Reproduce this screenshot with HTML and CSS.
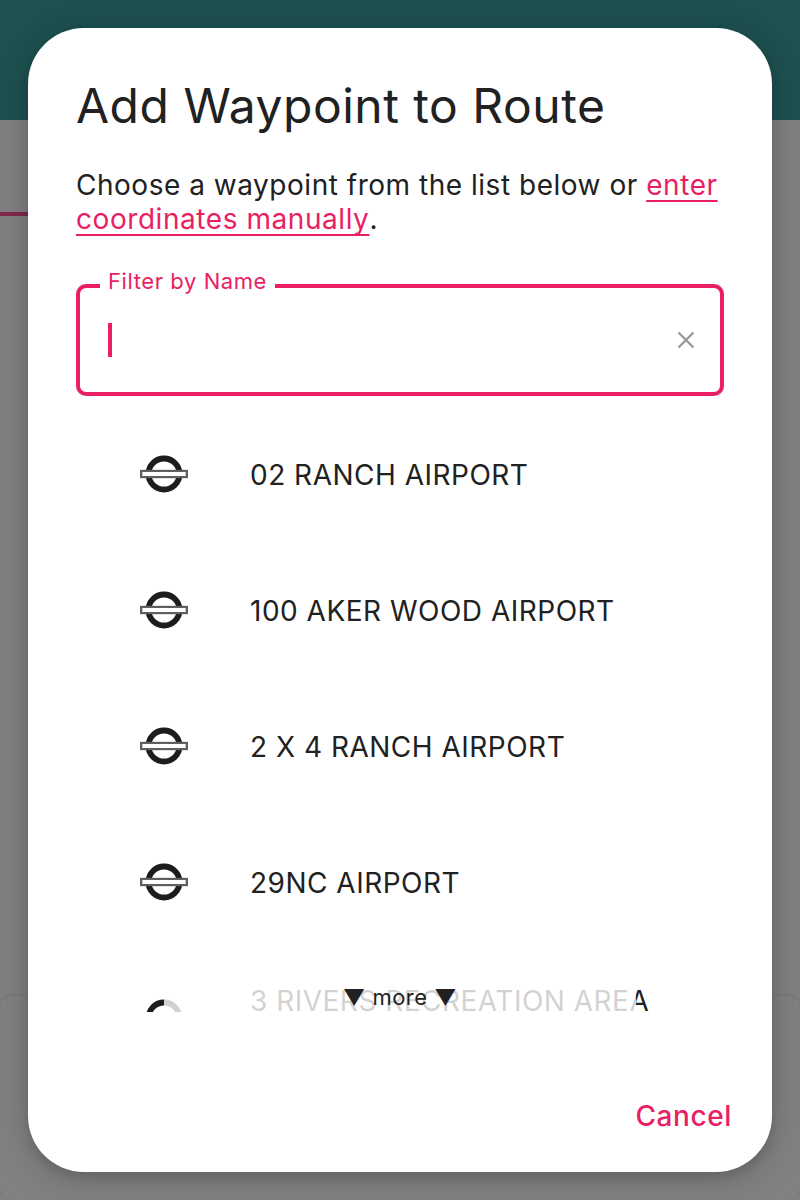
FILE: index.html
```html
<!DOCTYPE html>
<html lang="en">
<head>
<meta charset="utf-8">
<title>Add Waypoint to Route</title>
<link rel="stylesheet" href="styles.css">
</head>
<body>
<svg width="0" height="0" class="defs" aria-hidden="true">
  <symbol id="roundel" viewBox="0 0 48 48">
    <circle cx="24" cy="24" r="15.5" fill="none" stroke="#1c1c1c" stroke-width="5.8"/>
    <rect x="0" y="19.8" width="48" height="8.4" fill="#606060"/>
    <rect x="2.4" y="22" width="43.2" height="4" fill="#fff"/>
  </symbol>
</svg>
<div class="page">
  <div class="app-bar"></div>
  <div class="tabs"></div>
  <div class="content"></div>
  <div class="card"></div>
</div>
<div class="overlay">
  <main class="dialog">
    <h1 class="title">Add Waypoint to Route</h1>
    <p class="intro">Choose a waypoint from the list below or <a class="link">enter coordinates manually</a>.</p>
    <div class="field">
      <span class="label">Filter by Name</span>
      <span class="caret"></span>
      <svg class="clear" viewBox="0 0 18 18"><path d="M1.5 1.5l15 15M16.5 1.5l-15 15" fill="none" stroke="#999" stroke-width="2.3"/></svg>
    </div>
    <div class="list-wrap">
      <ul class="list">
        <li class="item"><svg class="icon"><use href="#roundel"/></svg><span class="name">02 RANCH AIRPORT</span></li>
        <li class="item"><svg class="icon"><use href="#roundel"/></svg><span class="name">100 AKER WOOD AIRPORT</span></li>
        <li class="item"><svg class="icon"><use href="#roundel"/></svg><span class="name">2 X 4 RANCH AIRPORT</span></li>
        <li class="item"><svg class="icon"><use href="#roundel"/></svg><span class="name">29NC AIRPORT</span></li>
        <li class="item"><svg class="icon"><use href="#roundel"/></svg><span class="name two-line">3 RIVERS RECREATION AREA</span></li>
      </ul>
      <div class="more">▼ more ▼</div>
    </div>
    <div class="actions"><button class="cancel">Cancel</button></div>
  </main>
</div>
</body>
</html>
```
FILE: styles.css
```css
* { box-sizing: border-box; }
body {
  margin: 0;
  height: 1200px;
  overflow: hidden;
  position: relative;
  font-family: Inter, "Liberation Sans", sans-serif;
  font-size: 28px;
  line-height: 34px;
  letter-spacing: 0.5px;
  color: #212121;
}
.defs { position: absolute; }
.page {
  height: 1200px;
  display: flex;
  flex-direction: column;
  background: #838083;
}
.app-bar { height: 120px; background: #1e5151; }
.tabs { height: 96px; border-bottom: 4px solid #812a4b; width: 400px; }
.content { flex: 1; }
.card {
  height: 204px;
  border-radius: 12px;
  background: #838083;
  box-shadow: 0 0 4px rgba(0, 0, 0, 0.12);
}
.overlay { position: absolute; inset: 0; padding: 28px; }
.dialog {
  height: 1144px;
  display: flex;
  flex-direction: column;
  padding: 48px;
  border-radius: 56px;
  background: #fff;
  box-shadow: 0 6px 10px rgba(0, 0, 0, 0.1), 0 4px 36px rgba(0, 0, 0, 0.22);
}
.title {
  margin: 0;
  padding-top: 1px;
  font-size: 48px;
  line-height: 58px;
  font-weight: 400;
}
.intro { margin: 33px 0 48px; letter-spacing: 0.52px; }
.link {
  color: #e91e63;
  letter-spacing: 0.56px;
  text-decoration: underline 2px;
  text-decoration-skip-ink: none;
  text-underline-offset: 5px;
}
.field {
  position: relative;
  flex: none;
  height: 112px;
  display: flex;
  align-items: center;
  justify-content: space-between;
  padding: 0 25px 0 28px;
  border: 4px solid #e91e63;
  border-radius: 10px;
}
.label {
  position: absolute;
  left: 20px;
  top: -24px;
  padding: 0 8px;
  background: #fff;
  color: #e91e63;
  font-size: 22px;
  line-height: 34px;
  letter-spacing: 0.58px;
}
.caret { width: 4px; height: 34px; background: #e91e63; }
.clear { width: 18px; height: 18px; }
.list-wrap {
  position: relative;
  flex: none;
  height: 606px;
  margin-top: 10px;
  overflow: hidden;
}
.list { margin: 0; padding: 0 64px; list-style: none; }
.item { height: 136px; display: flex; align-items: center; gap: 62px; white-space: nowrap; }
.icon { flex: none; width: 48px; height: 48px; filter: blur(0.6px); }
.name { padding-top: 2px; }
.two-line { padding-bottom: 36px; }
.more {
  position: absolute;
  left: 88px;
  right: 88px;
  bottom: 0;
  height: 30px;
  padding-top: 1px;
  text-align: center;
  font-size: 22px;
  line-height: 28px;
  background: rgba(255, 255, 255, 0.8);
}
.actions { display: flex; justify-content: flex-end; margin: 87px -8px 0 0; }
.cancel {
  border: 0;
  padding: 0;
  background: none;
  color: #e91e63;
  font: inherit;
  font-weight: 500;
  letter-spacing: 0.6px;
}
```
